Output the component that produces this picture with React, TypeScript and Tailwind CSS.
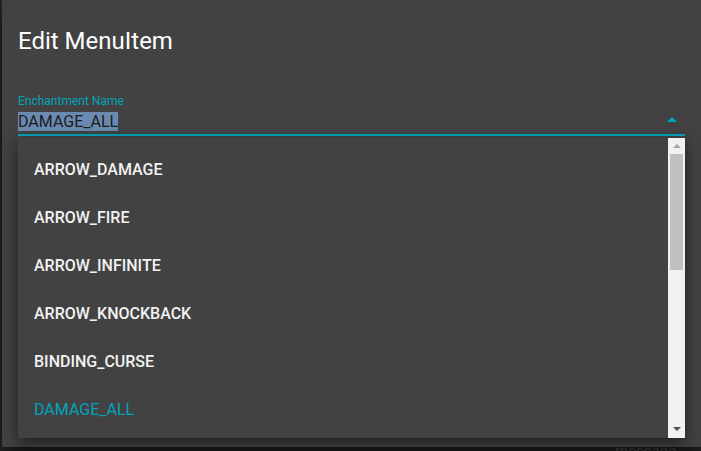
const options = [
  "ARROW_DAMAGE",
  "ARROW_FIRE",
  "ARROW_INFINITE",
  "ARROW_KNOCKBACK",
  "BINDING_CURSE",
  "DAMAGE_ALL",
];

const selected = "DAMAGE_ALL";

export default function App() {
  return (
    <div className="w-[701px] h-[451px] overflow-hidden bg-[#262626] font-['Roboto',sans-serif] relative">
      {/* dimmed page behind the dialog */}
      <div className="absolute left-[615px] top-[440px] text-[15px] text-[#555]">message</div>

      {/* dialog */}
      <div className="relative ml-[2px] h-[447px] bg-[#424242] shadow-[0_8px_20px_rgba(0,0,0,0.6)] px-4">
        <h2 className="pt-[26px] text-[24px] leading-[30px] text-white">Edit MenuItem</h2>

        <div className="mt-[38px] relative">
          <label className="block text-[12px] leading-[14px] text-[#00a5bd]">Enchantment Name</label>
          <div className="flex items-center h-[28px] border-b-2 border-[#00a5bd] pr-2">
            <span className="text-[16px] leading-[19px] text-[#1c1c1c] bg-[#6a8ab1]">{selected}</span>
            <svg className="ml-auto mb-[4px]" width="10" height="5" viewBox="0 0 10 5">
              <path d="M0 5 L5 0 L10 5 Z" fill="#00a5bd" />
            </svg>
          </div>

          {/* menu popover */}
          <div className="absolute left-0 right-0 top-[44px] h-[300px] bg-[#424242] shadow-[0_5px_14px_rgba(0,0,0,0.55)] flex">
            <ul className="flex-1 pt-[8px]">
              {options.map((o) => (
                <li
                  key={o}
                  className={
                    "h-[48px] flex items-center px-4 text-[16px] font-medium " +
                    (o === selected ? "text-[#00a5bd] font-normal" : "text-[#f2f2f2]")
                  }
                >
                  {o}
                </li>
              ))}
            </ul>
            <div className="w-[17px] bg-[#f1f1f1] flex flex-col items-center">
              <svg className="mt-[6px]" width="8" height="4" viewBox="0 0 8 4">
                <path d="M0 4 L4 0 L8 4 Z" fill="#a3a3a3" />
              </svg>
              <div className="mt-[6px] w-[13px] h-[116px] bg-[#c1c1c1]" />
              <svg className="mt-auto mb-[7px]" width="8" height="4" viewBox="0 0 8 4">
                <path d="M0 0 L4 4 L8 0 Z" fill="#505050" />
              </svg>
            </div>
          </div>
        </div>
      </div>
    </div>
  );
}
